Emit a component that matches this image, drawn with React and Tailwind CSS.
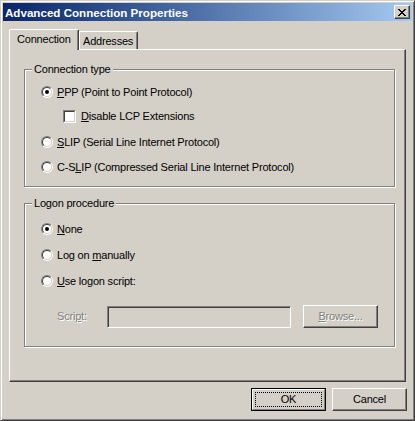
const font = "font-['Liberation_Sans',Arial,sans-serif]";
const disabled = "text-[#808080] [text-shadow:1px_1px_0_#ffffff]";

function Radio({ checked }) {
  return (
    <span className="inline-block w-[12px] h-[12px] shrink-0 rounded-full border border-t-[#808080] border-l-[#808080] border-b-white border-r-white">
      <span className="flex items-center justify-center w-full h-full rounded-full border border-t-[#404040] border-l-[#404040] border-b-[#d4d0c8] border-r-[#d4d0c8] bg-white">
        {checked && <span className="block w-[4px] h-[4px] rounded-full bg-black" />}
      </span>
    </span>
  );
}

function Checkbox() {
  return (
    <span className="inline-block w-[13px] h-[13px] shrink-0 border border-t-[#808080] border-l-[#808080] border-b-white border-r-white">
      <span className="block w-full h-full border border-t-[#404040] border-l-[#404040] border-b-[#d4d0c8] border-r-[#d4d0c8] bg-white" />
    </span>
  );
}

function RadioRow({ checked, children, className = "" }) {
  return (
    <div className={`flex items-center h-[16px] pl-[16px] gap-[4px] ${className}`}>
      <Radio checked={checked} />
      <span className="whitespace-nowrap">{children}</span>
    </div>
  );
}

function Group({ label, className = "", children }) {
  return (
    <div className={`relative border border-[#808080] shadow-[inset_1px_1px_0_#ffffff,1px_1px_0_#ffffff] ${className}`}>
      <span className="absolute left-[7px] -top-[7px] px-[2px] bg-[#d4d0c8] whitespace-nowrap">{label}</span>
      {children}
    </div>
  );
}

function CloseButton() {
  return (
    <div className="w-[16px] h-[14px] bg-[#d4d0c8] border border-t-white border-l-white border-b-[#404040] border-r-[#404040] shadow-[inset_-1px_-1px_0_#808080] flex items-center justify-center">
      <svg width="8" height="7" viewBox="0 0 8 7" shapeRendering="crispEdges">
        <path d="M0 0h2v1h-2zM6 0h2v1h-2zM1 1h2v1h-2zM5 1h2v1h-2zM2 2h4v1h-4zM3 3h2v1h-2zM2 4h4v1h-4zM1 5h2v1h-2zM5 5h2v1h-2zM0 6h2v1h-2zM6 6h2v1h-2z" fill="#000" />
      </svg>
    </div>
  );
}

export default function App() {
  return (
    <div className={`w-[415px] h-[421px] bg-[#d4d0c8] border border-t-[#d4d0c8] border-l-[#d4d0c8] border-b-[#404040] border-r-[#404040] shadow-[inset_1px_1px_0_#ffffff,inset_-1px_-1px_0_#808080] p-[2px] flex flex-col text-[11px] leading-[13px] tracking-[-0.2px] text-black ${font}`}>
      {/* Title bar */}
      <div className="h-[18px] flex items-center justify-between bg-gradient-to-r from-[#0a246a] to-[#a6caf0] pl-[2px] pr-[2px]">
        <span className="text-white font-bold text-[11.6px] tracking-normal whitespace-nowrap">Advanced Connection Properties</span>
        <CloseButton />
      </div>

      {/* Tabs + panel */}
      <div className="mt-[8px] px-[6px] flex flex-col">
        <div className="flex items-end relative z-10 -mb-[1px]">
          <div className="h-[21px] w-[70px] bg-[#d4d0c8] border-l border-t border-r border-l-white border-t-white border-r-[#404040] rounded-tl-[2px] rounded-tr-[2px] shadow-[inset_-1px_0_0_#808080] pl-[7px] pt-[3px]">
            Connection
          </div>
          <div className="h-[18px] w-[59px] mb-[1px] bg-[#d4d0c8] border-t border-r border-t-white border-r-[#404040] rounded-tr-[2px] shadow-[inset_-1px_0_0_#808080,inset_1px_0_0_#ffffff] pl-[4px] pt-[3px]">
            Addresses
          </div>
        </div>
        <div className="h-[333px] border border-t-white border-l-white border-b-[#404040] border-r-[#404040] shadow-[inset_-1px_-1px_0_#808080] pt-[19px] pl-[14px] pr-[10px] flex flex-col">
          <Group label="Connection type" className="h-[118px] pt-[14px]">
            <RadioRow checked>
              <u>P</u>PP (Point to Point Protocol)
            </RadioRow>
            <div className="flex items-center h-[16px] pl-[38px] gap-[5px] mt-[8px]">
              <Checkbox />
              <span className="whitespace-nowrap">
                <u>D</u>isable LCP Extensions
              </span>
            </div>
            <RadioRow className="mt-[10px]">
              <u>S</u>LIP (Serial Line Internet Protocol)
            </RadioRow>
            <RadioRow className="mt-[9px]">
              C-S<u>L</u>IP (Compressed Serial Line Internet Protocol)
            </RadioRow>
          </Group>

          <Group label="Logon procedure" className="h-[144px] mt-[16px] pt-[17px]">
            <RadioRow checked>
              <u>N</u>one
            </RadioRow>
            <RadioRow className="mt-[10px]">
              Log on <u>m</u>anually
            </RadioRow>
            <RadioRow className="mt-[10px]">
              <u>U</u>se logon script:
            </RadioRow>
            <div className="flex items-center mt-[16px] pl-[32px]">
              <span className={`w-[50px] ${disabled}`}>
                Scri<u>p</u>t:
              </span>
              <div className="w-[184px] h-[22px] border border-t-[#808080] border-l-[#808080] border-b-white border-r-white shadow-[inset_1px_1px_0_#404040,inset_-1px_-1px_0_#d4d0c8] bg-[#d4d0c8]" />
              <div className={`ml-[12px] w-[75px] h-[23px] flex items-center justify-center border border-t-white border-l-white border-b-[#404040] border-r-[#404040] shadow-[inset_-1px_-1px_0_#808080] ${disabled}`}>
                <span>
                  <u>B</u>rowse...
                </span>
              </div>
            </div>
          </Group>
        </div>
      </div>

      {/* Buttons */}
      <div className="flex justify-end gap-[6px] mt-[6px] pr-[5px]">
        <div className="w-[75px] h-[23px] border border-black">
          <div className="w-full h-full border border-t-white border-l-white border-b-[#808080] border-r-[#808080] p-[2px]">
            <div className="w-full h-full border border-dotted border-black flex items-center justify-center">OK</div>
          </div>
        </div>
        <div className="w-[75px] h-[23px] flex items-center justify-center border border-t-white border-l-white border-b-[#404040] border-r-[#404040] shadow-[inset_-1px_-1px_0_#808080]">
          Cancel
        </div>
      </div>
    </div>
  );
}
